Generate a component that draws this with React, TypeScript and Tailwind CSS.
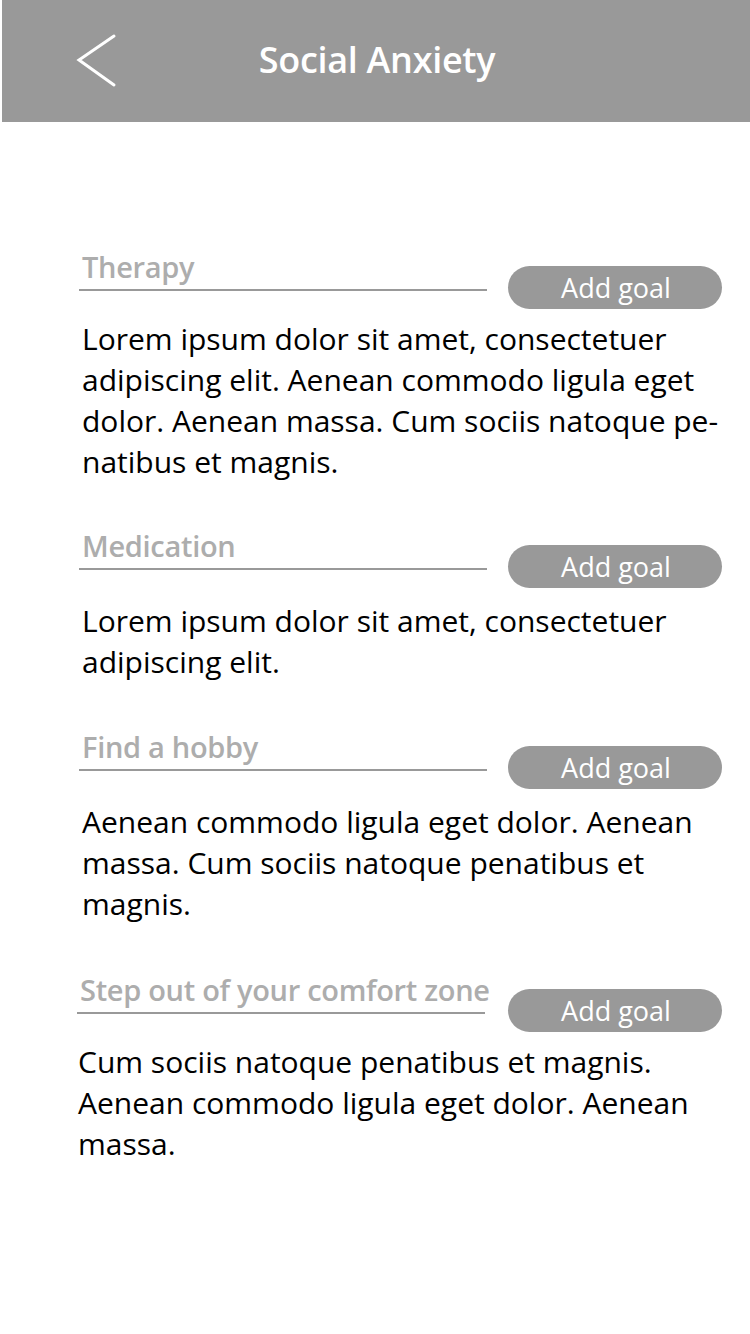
import React from "react";

interface GoalSectionProps {
  title: string;
  lines: string[];
  indent?: number;
  bodyGap: string;
  top: string;
}

const font = { fontFamily: '"Open Sans", "Liberation Sans", sans-serif' };

function GoalSection({ title, lines, bodyGap, top, indent = 0 }: GoalSectionProps) {
  return (
    <div className={top}>
      <div className="flex items-start h-[59px]">
        <div className={indent ? "ml-[77px] w-[408px]" : "ml-[79px] w-[408px]"}>
          <div className="pl-[3px] pb-[6px] h-[41px] border-b-2 border-[#999] text-[29px] leading-[33px] font-semibold text-[#adadad] whitespace-nowrap tracking-[-0.3px]">
            {title}
          </div>
        </div>
        <button className="ml-auto mr-[28px] mt-[16px] w-[214px] h-[43px] rounded-full bg-[#999] text-white text-[27px] leading-[42px] text-center pl-[2px]">
          Add goal
        </button>
      </div>
      <p
        className={`${bodyGap} ${indent ? "pl-[78px]" : "pl-[82px]"} text-[30px] leading-[41px] text-black whitespace-nowrap`}
      >
        {lines.map((l, i) => (
          <React.Fragment key={i}>
            {l}
            {i < lines.length - 1 && <br />}
          </React.Fragment>
        ))}
      </p>
    </div>
  );
}

export default function App() {
  return (
    <div className="w-[750px] h-[1334px] bg-white" style={font}>
      <header className="ml-[2px] h-[122px] bg-[#999] relative flex items-center justify-center">
        <svg
          className="absolute left-[74px] top-[32px]"
          width="42"
          height="58"
          viewBox="0 0 42 58"
          fill="none"
        >
          <path
            d="M38 4 L3 28 L38 53"
            stroke="white"
            strokeWidth="3"
            strokeLinecap="round"
            strokeLinejoin="miter"
          />
        </svg>
        <h1 className="text-white text-[36px] font-semibold tracking-[-0.3px] pl-[2px] -mt-[2px]">
          Social Anxiety
        </h1>
      </header>

      <main>
        <GoalSection
          top="mt-[128px]"
          bodyGap="mt-[9px]"
          title="Therapy"
          lines={[
            "Lorem ipsum dolor sit amet, consectetuer",
            "adipiscing elit. Aenean commodo ligula eget",
            "dolor. Aenean massa. Cum sociis natoque pe-",
            "natibus et magnis.",
          ]}
        />
        <GoalSection
          top="mt-[47px]"
          bodyGap="mt-[12px]"
          title="Medication"
          lines={["Lorem ipsum dolor sit amet, consectetuer", "adipiscing elit."]}
        />
        <GoalSection
          top="mt-[48px]"
          bodyGap="mt-[12px]"
          title="Find a hobby"
          lines={[
            "Aenean commodo ligula eget dolor. Aenean",
            "massa. Cum sociis natoque penatibus et",
            "magnis.",
          ]}
        />
        <GoalSection
          top="mt-[49px]"
          bodyGap="mt-[9px]"
          indent={1}
          title="Step out of your comfort zone"
          lines={[
            "Cum sociis natoque penatibus et magnis.",
            "Aenean commodo ligula eget dolor. Aenean",
            "massa.",
          ]}
        />
      </main>
    </div>
  );
}
